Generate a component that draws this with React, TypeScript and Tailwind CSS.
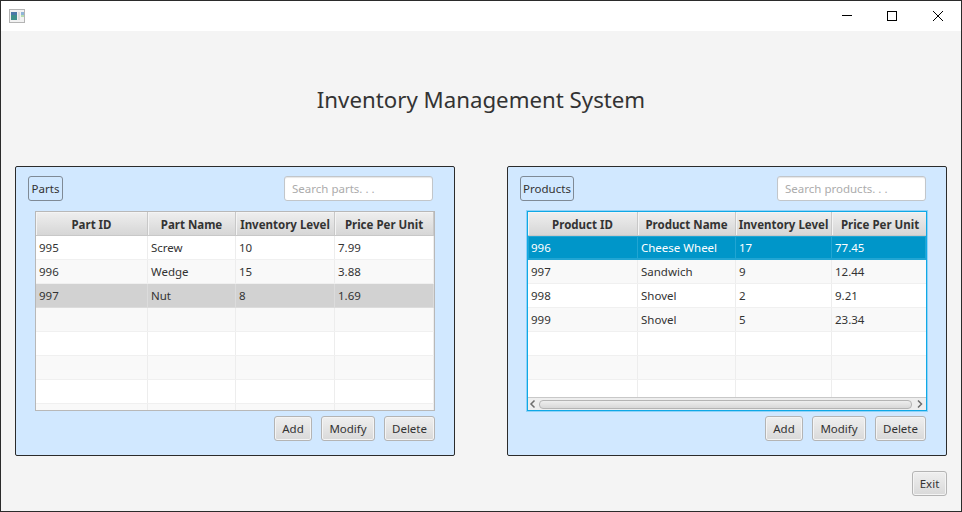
import React from 'react';

interface DataTableProps {
  columns: string[];
  rows: string[][];
  selected: number;
  focused?: boolean;
  gridClass: string;
}

const PART_ROWS = [
  ['995', 'Screw', '10', '7.99'],
  ['996', 'Wedge', '15', '3.88'],
  ['997', 'Nut', '8', '1.69'],
];

const PRODUCT_ROWS = [
  ['996', 'Cheese Wheel', '17', '77.45'],
  ['997', 'Sandwich', '9', '12.44'],
  ['998', 'Shovel', '2', '9.21'],
  ['999', 'Shovel', '5', '23.34'],
];

const FxButton: React.FC<{ label: string; className: string }> = ({ label, className }) => (
  <button className={`h-[25px] rounded-[3px] border border-[#b4b4b4] bg-gradient-to-b from-[#efefef] to-[#d9d9d9] text-[11.5px] leading-none text-[#333333] shadow-[inset_0_0_0_1px_#f4f4f4] ${className}`}>
    {label}
  </button>
);

const SectionLabel: React.FC<{ label: string; className: string }> = ({ label, className }) => (
  <div className={`flex h-[25px] items-center justify-center rounded-[3px] border border-[#7f8a96] text-[11.5px] text-[#333333] ${className}`}>
    {label}
  </div>
);

const SearchBox: React.FC<{ placeholder: string }> = ({ placeholder }) => (
  <input
    readOnly
    placeholder={placeholder}
    className="h-[25px] w-[149px] rounded-[3px] border border-[#c2c6ca] bg-white px-[7px] text-[11.5px] text-[#333333] shadow-[inset_0_1px_1px_#e6e6e6] outline-none placeholder:text-[#acacac]"
  />
);

const DataTable: React.FC<DataTableProps> = ({ columns, rows, selected, focused, gridClass }) => {
  const slots = Array.from({ length: 8 }, (_, i) => rows[i] ?? ['', '', '', '']);

  return (
    <div className="flex min-h-0 flex-1 flex-col overflow-hidden">
      <div className={`grid h-[24px] shrink-0 border-b border-[#c8c8c8] bg-gradient-to-b from-[#efefef] to-[#d6d6d6] ${gridClass}`}>
        {columns.map((col) => (
          <div key={col} className="flex items-center justify-center whitespace-nowrap border-r border-[#c8c8c8] pt-[2px] text-[11.5px] font-bold text-[#333333] shadow-[inset_1px_1px_0_#f4f4f4]">
            {col}
          </div>
        ))}
      </div>
      <div className="min-h-0 flex-1 overflow-hidden bg-white">
        {slots.map((row, i) => {
          const isSelected = i === selected;
          let rowClass = i % 2 === 0 ? 'bg-white border-[#f0f0f0] text-[#333333]' : 'bg-[#f9f9f9] border-[#f0f0f0] text-[#333333]';
          let cellClass = 'border-[#ededed]';
          if (isSelected) {
            rowClass = focused
              ? 'bg-[#0096c9] border-[#21a5d3] text-white shadow-[inset_0_0_0_1px_#21a5d3]'
              : 'bg-[#d2d2d2] border-[#dcdcdc] text-[#333333]';
            cellClass = focused ? 'border-[#21a5d3]' : 'border-[#dcdcdc]';
          }
          return (
            <div key={i} className={`grid h-[24px] border-b ${gridClass} ${rowClass}`}>
              {row.map((cell, j) => (
                <div key={j} className={`flex items-center whitespace-nowrap border-r pl-[3px] text-[11.5px] ${cellClass}`}>
                  {cell}
                </div>
              ))}
            </div>
          );
        })}
      </div>
    </div>
  );
};

const HScrollBar: React.FC = () => (
  <div className="flex h-[13px] shrink-0 items-center border-t border-[#c8c8c8] bg-[#eeeeee]">
    <svg width="11" height="12" viewBox="0 0 11 12" className="shrink-0">
      <path d="M6.5 2.5 3 6l3.5 3.5" fill="none" stroke="#6d6d6d" strokeWidth="1.5" />
    </svg>
    <div className="h-[9px] flex-1 rounded-[4px] border border-[#b4b4b4] bg-gradient-to-b from-[#eeeeee] to-[#d8d8d8]" />
    <svg width="14" height="12" viewBox="0 0 14 12" className="shrink-0">
      <path d="M6 2.5 9.5 6 6 9.5" fill="none" stroke="#6d6d6d" strokeWidth="1.5" />
    </svg>
  </div>
);

const WindowIcon: React.FC = () => (
  <svg width="16" height="14" viewBox="0 0 16 14" className="ml-[8px]">
    <rect x="0.5" y="0.5" width="15" height="13" fill="#f2f2f2" stroke="#b4b4b4" />
    <rect x="2" y="3" width="6" height="8" fill="#3f8f8a" />
    <rect x="2" y="3" width="6" height="3" fill="#4a78a8" />
    <rect x="9" y="3" width="2" height="8" fill="#dedede" />
    <rect x="12" y="3" width="3" height="3" fill="#8fb4d8" />
    <rect x="12" y="6" width="3" height="2" fill="#b5dcb0" />
  </svg>
);

export default function App() {
  return (
    <div className="flex h-[512px] w-[962px] flex-col overflow-hidden border border-[#2b2b2b] bg-[#f4f4f4] font-['Noto_Sans',sans-serif]">
      {/* Title bar */}
      <div className="flex h-[30px] shrink-0 items-center justify-between bg-white">
        <WindowIcon />
        <div className="mr-[1px] flex">
          <div className="flex h-[30px] w-[45px] items-center justify-center">
            <svg width="10" height="10" viewBox="0 0 10 10">
              <path d="M0 4.5h10" stroke="#000" />
            </svg>
          </div>
          <div className="flex h-[30px] w-[46px] items-center justify-center">
            <svg width="10" height="10" viewBox="0 0 10 10">
              <rect x="0.5" y="0.5" width="9" height="9" fill="none" stroke="#000" />
            </svg>
          </div>
          <div className="flex h-[30px] w-[45px] items-center justify-center">
            <svg width="10" height="10" viewBox="0 0 10 10">
              <path d="M0 0l10 10M10 0 0 10" stroke="#000" />
            </svg>
          </div>
        </div>
      </div>

      {/* Heading */}
      <div className="h-[135px] shrink-0 pt-[53px] text-center text-[22.25px] leading-[32px] text-[#333333]">
        Inventory Management System
      </div>

      {/* Panels */}
      <div className="flex gap-[52px] px-[14px]">
        <div className="flex h-[290px] w-[440px] flex-col rounded-[2px] border border-[#2b2b2b] bg-[#d1e8ff] pb-[14px] pl-[19px] pr-[19px] pt-[9px]">
          <div className="-ml-[7px] mr-[2px] flex items-center justify-between">
            <SectionLabel label="Parts" className="w-[35px]" />
            <SearchBox placeholder="Search parts. . ." />
          </div>
          <div className="mt-[10px] flex h-[200px] flex-col border border-[#b8b8b8] bg-white">
            <DataTable
              columns={['Part ID', 'Part Name', 'Inventory Level', 'Price Per Unit']}
              rows={PART_ROWS}
              selected={2}
              gridClass="grid-cols-[112px_88px_99px_99px]"
            />
          </div>
          <div className="mt-[5px] flex justify-end gap-[9px]">
            <FxButton label="Add" className="w-[38px]" />
            <FxButton label="Modify" className="w-[54px]" />
            <FxButton label="Delete" className="w-[51px]" />
          </div>
        </div>

        <div className="flex h-[290px] w-[440px] flex-col rounded-[2px] border border-[#2b2b2b] bg-[#d1e8ff] pb-[14px] pl-[19px] pr-[19px] pt-[9px]">
          <div className="-ml-[7px] mr-[1px] flex items-center justify-between">
            <SectionLabel label="Products" className="w-[54px]" />
            <SearchBox placeholder="Search products. . ." />
          </div>
          <div className="mt-[10px] flex h-[200px] flex-col border border-[#0fa8e6] bg-white shadow-[0_0_0_1px_#0fa8e655]">
            <DataTable
              columns={['Product ID', 'Product Name', 'Inventory Level', 'Price Per Unit']}
              rows={PRODUCT_ROWS}
              selected={0}
              focused
              gridClass="grid-cols-[110px_98px_96px_97px]"
            />
            <HScrollBar />
          </div>
          <div className="mr-[1px] mt-[5px] flex justify-end gap-[9px]">
            <FxButton label="Add" className="w-[38px]" />
            <FxButton label="Modify" className="w-[54px]" />
            <FxButton label="Delete" className="w-[51px]" />
          </div>
        </div>
      </div>

      {/* Footer */}
      <div className="mt-[15px] flex justify-end pr-[14px]">
        <FxButton label="Exit" className="w-[35px]" />
      </div>
    </div>
  );
}
